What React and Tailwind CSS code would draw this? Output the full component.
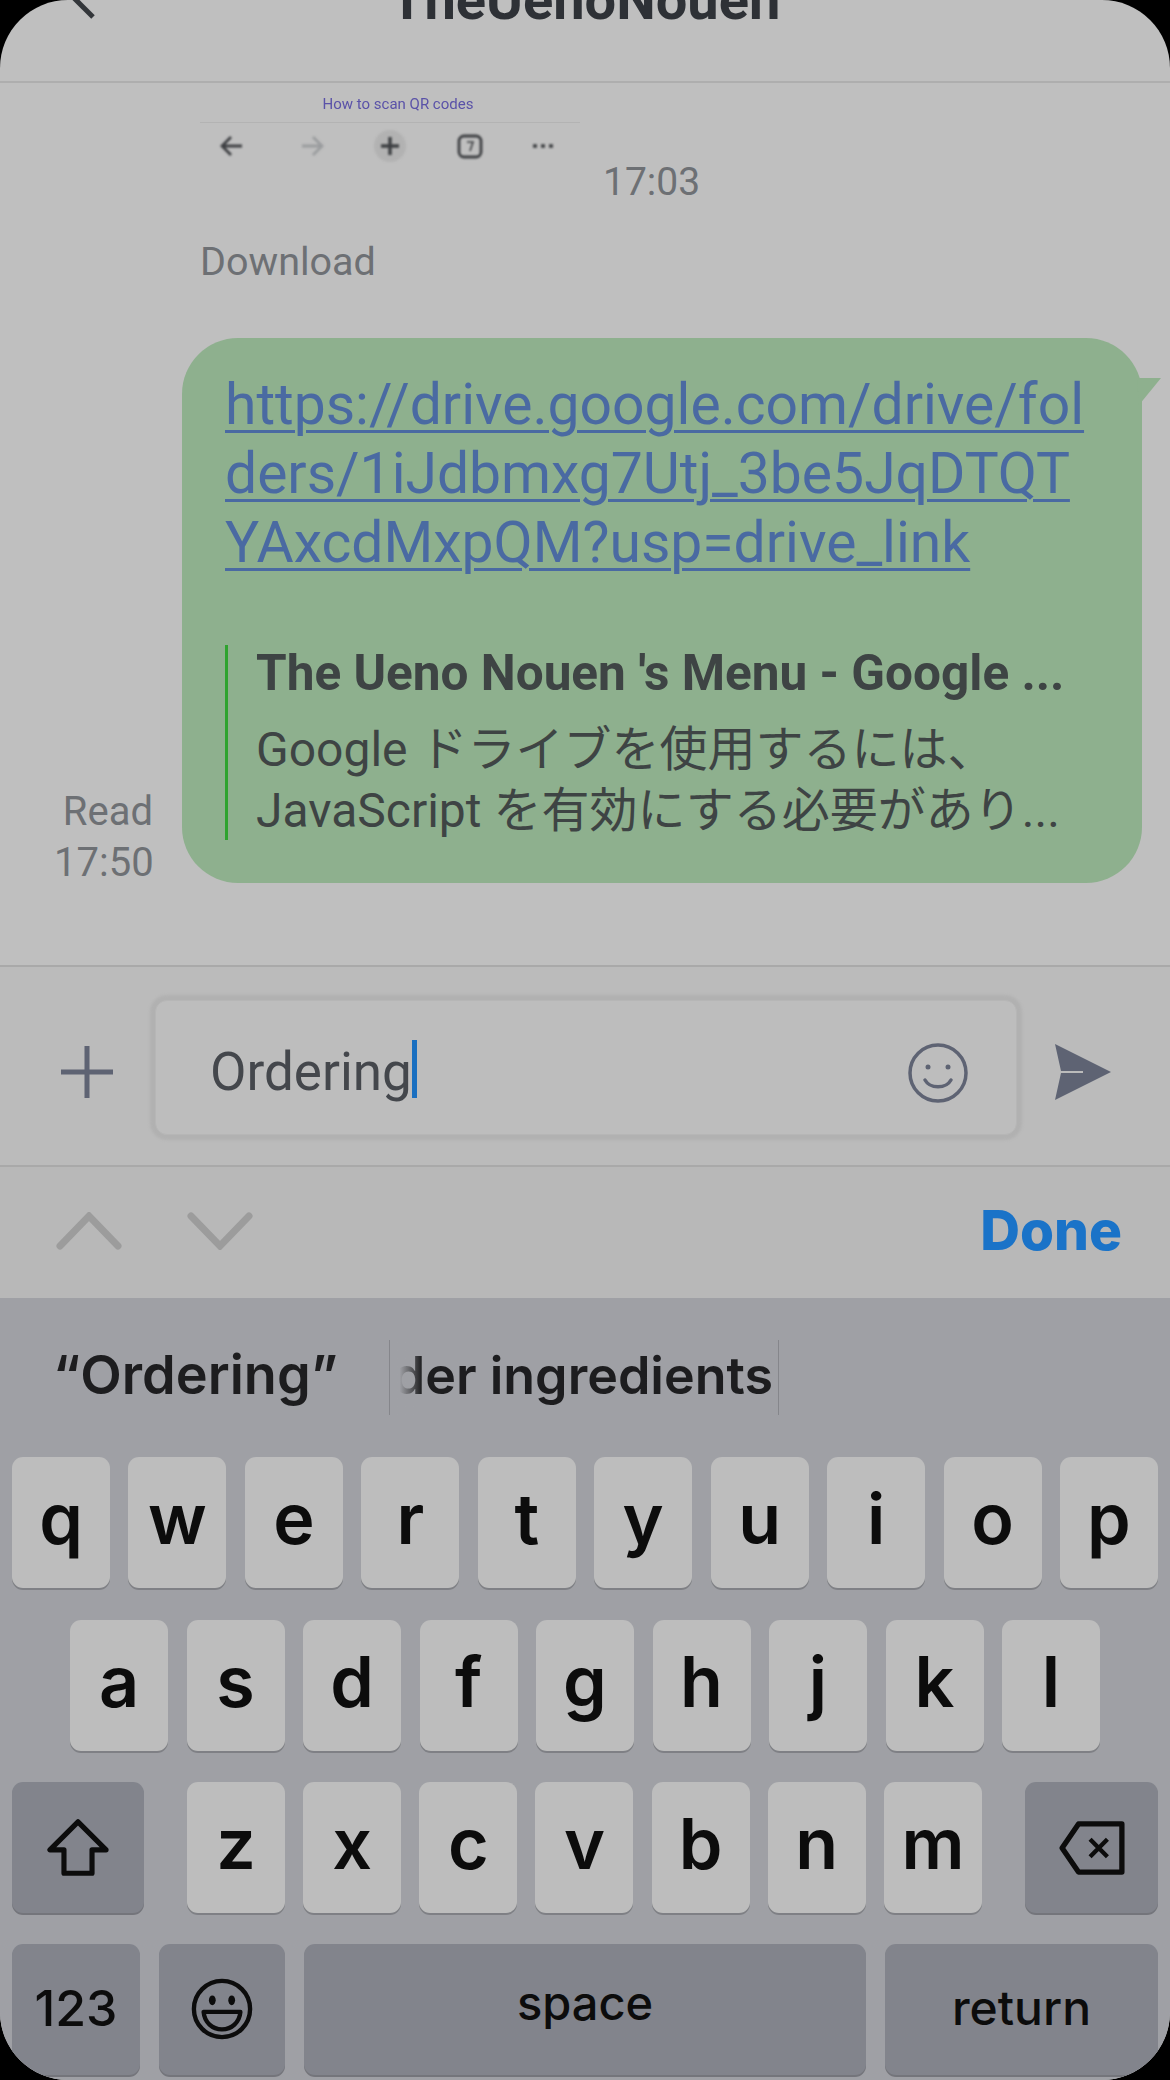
import React from "react";

const rowOne = ["q", "w", "e", "r", "t", "y", "u", "i", "o", "p"];
const rowTwo = ["a", "s", "d", "f", "g", "h", "j", "k", "l"];
const rowThree = ["z", "x", "c", "v", "b", "n", "m"];

const Key = ({ label }) => (
    <div className="w-[98px] h-[131px] shrink-0 rounded-[11px] bg-[#bdbdbd] shadow-[0_2px_0_#7f8085] flex items-center justify-center text-[70px] font-semibold leading-none text-[#0c0c0c] pb-[8px]">
        {label}
    </div>
);

const DarkKey = ({ className, children }) => (
    <div className={`h-[131px] shrink-0 rounded-[11px] bg-[#82848c] shadow-[0_2px_0_#74757b] flex items-center justify-center text-[#0c0c0c] ${className}`}>
        {children}
    </div>
);

const ThumbIcons = () => (
    <svg width="380" height="44" viewBox="0 0 380 44" fill="none" stroke="#3d3f42" strokeWidth="2.8" className="blur-[0.8px]">
        <path d="M22 22H42M31 13l-9 9 9 9" />
        <path d="M102 22h20M113 13l9 9-9 9" stroke="#9a9c9e" />
        <circle cx="190" cy="22" r="16" fill="#b2b2b2" stroke="none" />
        <path d="M190 13v18M181 22h18" strokeWidth="3.4" />
        <rect x="259" y="12" width="22" height="21" rx="5" />
        <path d="M267 18h6l-3 9" strokeWidth="1.6" />
        <path d="M333 22h4M341 22h4M349 22h4" strokeWidth="3.6" />
    </svg>
);

const App = () => {
    return (
        <div className="w-[1170px] h-[2080px] bg-black font-['Roboto','Noto_Sans_CJK_JP',sans-serif]">
            <div className="w-full h-full rounded-[68px] overflow-hidden bg-[#bfbfbf] flex flex-col">
                {/* Header, scrolled partly off the top */}
                <div className="h-[83px] shrink-0 border-b-2 border-[#aeaeae] relative overflow-hidden">
                    <svg width="40" height="30" viewBox="0 0 40 30" fill="none" stroke="#33363a" strokeWidth="5" className="absolute left-[62px] top-0">
                        <path d="M10 -4L31 17" />
                    </svg>
                    <div className="h-[18px] flex items-end justify-center">
                        <span className="text-[56px] leading-none font-bold text-[#2e3136] whitespace-nowrap mb-[-10px]">TheUenoNouen</span>
                    </div>
                </div>

                {/* Messages */}
                <div className="h-[882px] shrink-0">
                    <div className="pl-[200px] pt-[11px] flex items-end">
                        <div className="w-[380px] flex flex-col">
                            <div className="h-[26px] flex items-center justify-center pl-[16px] pb-[5px] text-[15px] text-[#5a52a8] blur-[0.7px] whitespace-nowrap">How to scan QR codes</div>
                            <div className="mt-[2px] h-[1px] bg-[#b3b3b3]"></div>
                            <div className="mt-[1px]"><ThumbIcons /></div>
                        </div>
                        <span className="ml-[23px] text-[39px] leading-[42px] text-[#6d7074] mb-[-35px]">17:03</span>
                    </div>
                    <div className="pl-[200px] mt-[73px] text-[39.5px] leading-[42px] text-[#6d7074]">Download</div>

                    <div className="mt-[55px] flex items-end pl-[54px]">
                        <div className="w-[99px] mr-[29px] text-right text-[40px] leading-[51px] text-[#6d7074] mb-[-5px]">
                            <div>Read</div>
                            <div>17:50</div>
                        </div>
                        <div className="relative w-[960px] h-[545px] rounded-[56px] bg-[#8eb08e] pl-[43px] pr-[30px] pt-[32px]">
                            <svg width="26" height="28" viewBox="0 0 26 28" className="absolute right-[-21px] top-[40px]">
                                <path d="M0 0H24L2 27Z" fill="#8eb08e" />
                            </svg>
                            <a className="block text-[57px] leading-[69px] text-[#4a6aa2] underline underline-offset-[6px] decoration-[3px] whitespace-nowrap">
                                https://drive.google.com/drive/fol<br />
                                ders/1iJdbmxg7Utj_3be5JqDTQT<br />
                                YAxcdMxpQM?usp=drive_link
                            </a>
                            <div className="mt-[68px] border-l-[3px] border-[#2fa32f] h-[195px] pl-[28px] text-[#3e4444]">
                                <div className="text-[49.5px] leading-[56px] font-bold whitespace-nowrap">The Ueno Nouen 's Menu - Google ...</div>
                                <div className="mt-[18px] text-[48px] leading-[61px] whitespace-nowrap">Google ドライブを使用するには、</div>
                                <div className="text-[48px] leading-[61px] whitespace-nowrap">JavaScript を有効にする必要があり...</div>
                            </div>
                        </div>
                    </div>
                </div>

                {/* Input row */}
                <div className="h-[202px] shrink-0 border-y-2 border-[#a9a9a9] bg-[#bbbbbb] flex items-center">
                    <svg width="54" height="54" viewBox="0 0 54 54" fill="none" stroke="#5e6373" strokeWidth="5" className="ml-[60px] mr-[41px] mt-[12px] shrink-0">
                        <path d="M27 1v52M1 27h52" />
                    </svg>
                    <div className="w-[862px] h-[135px] mt-[3px] shrink-0 rounded-[12px] bg-[#bdbdbd] border border-[#b6b6b6] shadow-[0_0_3px_5px_#b1b1b1] flex items-center pl-[54px] pr-[48px]">
                        <span className="text-[53px] leading-none text-[#44474c] mt-[10px]">Ordering</span>
                        <span className="w-[5px] h-[58px] bg-[#1a6fc0] mt-[3px]"></span>
                        <svg width="60" height="60" viewBox="0 0 60 60" fill="none" stroke="#5e6373" strokeWidth="3.5" className="ml-auto mt-[10px]">
                            <circle cx="30" cy="30" r="28" />
                            <circle cx="20" cy="24" r="2.5" fill="#5e6373" stroke="none" />
                            <circle cx="40" cy="24" r="2.5" fill="#5e6373" stroke="none" />
                            <path d="M17 37c5 9 21 9 26 0" strokeLinecap="round" />
                        </svg>
                    </div>
                    <svg width="60" height="60" viewBox="0 0 60 60" className="ml-[36px] mt-[12px] shrink-0">
                        <path d="M2 2L58 30 2 58 8 31H30V29H8Z" fill="#5e6373" />
                    </svg>
                </div>

                {/* Keyboard accessory bar */}
                <div className="h-[131px] shrink-0 bg-[#b8b8b8] flex items-center pl-[56px] pr-[48px]">
                    <svg width="66" height="38" viewBox="0 0 66 38" fill="none" stroke="#9c9c9c" strokeWidth="7" strokeLinecap="round" className="mb-[4px]">
                        <path d="M4 34L33 4 62 34" />
                    </svg>
                    <svg width="66" height="38" viewBox="0 0 66 38" fill="none" stroke="#9c9c9c" strokeWidth="7" strokeLinecap="round" className="ml-[65px] mb-[4px]">
                        <path d="M4 4L33 34 62 4" />
                    </svg>
                    <span className="ml-auto text-[55px] leading-none font-['Inter',sans-serif] font-extrabold text-[#1a73c8] pb-[4px]">Done</span>
                </div>

                {/* Keyboard */}
                <div className="flex-1 bg-[#9fa0a5] font-['Inter',sans-serif]">
                    <div className="h-[159px] flex items-center">
                        <span className="ml-[53px] w-[336px] text-[54px] font-semibold text-[#1d1d1f] leading-none whitespace-nowrap pb-[6px]">“Ordering”</span>
                        <div className="relative w-[390px] h-[75px] border-x border-[#85868b] flex items-center justify-end overflow-hidden pr-[5px]">
                            <span className="text-[52px] font-semibold text-[#1d1d1f] leading-none whitespace-nowrap pb-[4px]">der ingredients</span>
                            <div className="absolute left-0 top-0 bottom-0 w-[32px] bg-gradient-to-r from-[#9fa0a5] from-30% to-transparent"></div>
                        </div>
                    </div>
                    <div className="flex justify-between px-[12px]">
                        {rowOne.map((k) => <Key key={k} label={k} />)}
                    </div>
                    <div className="mt-[32px] flex justify-between px-[70px]">
                        {rowTwo.map((k) => <Key key={k} label={k} />)}
                    </div>
                    <div className="mt-[31px] flex justify-between items-center px-[12px]">
                        <DarkKey className="w-[132px]">
                            <svg width="62" height="58" viewBox="0 0 66 62" fill="none" stroke="#0c0c0c" strokeWidth="5.5" strokeLinejoin="round">
                                <path d="M33 3L3 33H18V58H48V33H63Z" />
                            </svg>
                        </DarkKey>
                        <div className="w-[795px] flex justify-between">
                            {rowThree.map((k) => <Key key={k} label={k} />)}
                        </div>
                        <DarkKey className="w-[133px]">
                            <svg width="66" height="54" viewBox="0 0 68 56" fill="none" stroke="#0c0c0c" strokeWidth="5.5" strokeLinejoin="round">
                                <path d="M20 3H65V53H20L3 28Z" />
                                <path d="M32 19l18 18M50 19L32 37" strokeWidth="4.5" />
                            </svg>
                        </DarkKey>
                    </div>
                    <div className="mt-[31px] flex gap-[19px] px-[12px]">
                        <DarkKey className="w-[128px] text-[50px] font-medium pb-[3px]">123</DarkKey>
                        <DarkKey className="w-[126px] pb-[2px]">
                            <svg width="62" height="62" viewBox="0 0 64 64" fill="none" stroke="#0c0c0c" strokeWidth="4.5">
                                <circle cx="32" cy="32" r="29" />
                                <ellipse cx="22" cy="23" rx="3.5" ry="5" fill="#0c0c0c" stroke="none" />
                                <ellipse cx="42" cy="23" rx="3.5" ry="5" fill="#0c0c0c" stroke="none" />
                                <path d="M13 35H51C50 46 42 53 32 53S14 46 13 35Z" strokeLinejoin="round" />
                            </svg>
                        </DarkKey>
                        <DarkKey className="w-[562px] text-[47px] font-medium pb-[12px]">space</DarkKey>
                        <DarkKey className="w-[273px] text-[48px] font-medium pb-[3px]">return</DarkKey>
                    </div>
                </div>
            </div>
        </div>
    );
};

export default App;
